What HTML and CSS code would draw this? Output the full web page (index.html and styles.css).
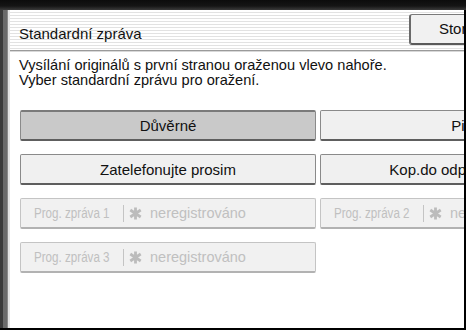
FILE: index.html
```html
<!DOCTYPE html>
<html lang="cs">
<head>
<meta charset="utf-8">
<title>Standardní zpráva</title>
<link rel="stylesheet" href="styles.css">
</head>
<body>
<div class="screen">
  <div class="topbar"></div>
  <div class="leftstrip"></div>
  <div class="panel">
    <div class="titlebar">
      <span class="title">Standardní zpráva</span>
      <div class="btn-cancel" role="button">Storno</div>
    </div>
    <div class="content">
      <p class="msg">Vysílání originálů s první stranou oraženou vlevo nahoře.<br>Vyber standardní zprávu pro oražení.</p>
      <div class="grid">
        <div class="btn selected" role="button">Důvěrné</div>
        <div class="btn" role="button">Pilné</div>
        <div class="btn" role="button">Zatelefonujte prosim</div>
        <div class="btn" role="button">Kop.do odpov. oddělení</div>
        <div class="btn disabled" role="button"><span class="plabel"><span class="pinner">Prog. zpráva 1</span></span><span class="sep"></span><svg class="ast" viewBox="0 0 12 12"><path d="M6 0.5V11.5M1.2 2.8L10.8 9.2M10.8 2.8L1.2 9.2"/></svg><span class="ntext">neregistrováno</span></div>
        <div class="btn disabled" role="button"><span class="plabel"><span class="pinner">Prog. zpráva 2</span></span><span class="sep"></span><svg class="ast" viewBox="0 0 12 12"><path d="M6 0.5V11.5M1.2 2.8L10.8 9.2M10.8 2.8L1.2 9.2"/></svg><span class="ntext">neregistrováno</span></div>
        <div class="btn disabled" role="button"><span class="plabel"><span class="pinner">Prog. zpráva 3</span></span><span class="sep"></span><svg class="ast" viewBox="0 0 12 12"><path d="M6 0.5V11.5M1.2 2.8L10.8 9.2M10.8 2.8L1.2 9.2"/></svg><span class="ntext">neregistrováno</span></div>
      </div>
    </div>
  </div>
  <div class="rightstrip"></div>
  <div class="bottombar"></div>
</div>
</body>
</html>
```

FILE: styles.css
```css
html, body {
  margin: 0;
  padding: 0;
}
body {
  width: 466px;
  height: 330px;
  overflow: hidden;
  background: #222;
  font-family: "Liberation Sans", Arial, sans-serif;
  font-size: 14px;
  color: #111;
}
.screen {
  display: grid;
  grid-template-columns: 8px 456px 2px;
  grid-template-rows: 10px 318px 2px;
  width: 466px;
  height: 330px;
}
.topbar {
  grid-column: 1 / 4;
  background: linear-gradient(#0c0c0c 0, #151515 6px, #3a3a3a 10px);
}
.leftstrip {
  background:
    linear-gradient(to right, #3a3a3a 0 3px, #6a6a6a 3px 7px, #8a8a8a 7px 8px);
}
.rightstrip {
  background: #000;
}
.bottombar {
  grid-column: 1 / 4;
  background: #000;
}
.panel {
  background: #fff;
  border-left: 2px solid #e4e4e4;
  overflow: hidden;
  display: flex;
  flex-direction: column;
}
.titlebar {
  height: 40px;
  flex: none;
  display: flex;
  align-items: flex-start;
  background: repeating-linear-gradient(#fff 0 2px, #e2e2e2 2px 3px);
  border-bottom: 1px solid #9a9a9a;
  box-shadow: 0 1px 0 #d8d8d8;
  padding-left: 9px;
}
.title {
  font-size: 15px;
  line-height: 15px;
  margin-top: 16px;
  flex: 1;
  white-space: nowrap;
}
.btn-cancel {
  flex: none;
  box-sizing: border-box;
  width: 103px;
  height: 31px;
  margin-top: 4px;
  margin-right: -48px;
  font-size: 15px;
  line-height: 28px;
  text-align: center;
  color: #111;
  background: #f1f1f1;
  border: 1px solid #7a7a7a;
  border-bottom: 2px solid #5a5a5a;
  border-left: 2px solid #6a6a6a;
  border-radius: 3px;
  white-space: nowrap;
}
.content {
  padding: 7px 0 0 9px;
}
.msg {
  margin: 0;
  font-size: 14.6px;
  line-height: 15px;
  white-space: nowrap;
}
.grid {
  display: grid;
  grid-template-columns: 296px 296px;
  column-gap: 4px;
  row-gap: 13px;
  margin-top: 22px;
  margin-left: 1px;
}
.btn {
  height: 31px;
  box-sizing: border-box;
  display: flex;
  align-items: center;
  justify-content: center;
  font-size: 15px;
  color: #111;
  background: #f0f0f0;
  border: 1px solid #8a8a8a;
  border-bottom: 2px solid #5e5e5e;
  border-radius: 2px;
  white-space: nowrap;
  overflow: hidden;
}
.btn.selected {
  background: #c9c9c9;
  border-top: 2px solid #7a7a7a;
}
.btn.disabled {
  justify-content: flex-start;
  padding-left: 13px;
  background: #f1f1f1;
  border: 1px solid #c4c4c4;
  border-bottom: 2px solid #b2b2b2;
  color: #c0c0c0;
}
.plabel {
  width: 89px;
  flex: none;
  font-size: 14px;
}
.pinner {
  display: inline-block;
  transform: scaleX(0.83);
  transform-origin: left center;
}
.sep {
  width: 1px;
  height: 17px;
  background: #c4c4c4;
  flex: none;
}
.ast {
  width: 13px;
  height: 13px;
  margin: 0 8px 0 5px;
  flex: none;
  fill: none;
  stroke: #bcbcbc;
  stroke-width: 2.6;
}
.ntext {
  font-size: 14.5px;
}
```
